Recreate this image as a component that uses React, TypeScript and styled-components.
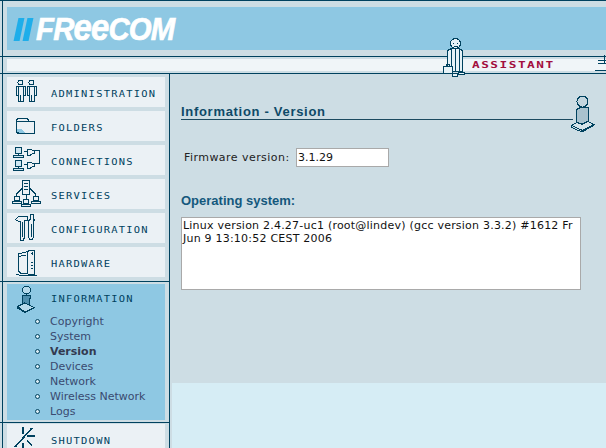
import React from 'react';
import styled, { createGlobalStyle } from 'styled-components';

const DARK = '#00425f';
const PALE = '#cddde4';
const SKY = '#8ec8e3';

const GlobalStyle = createGlobalStyle`
  html, body {
    margin: 0;
    padding: 0;
    background: ${PALE};
  }
`;

const Page = styled.div`
  position: relative;
  width: 606px;
  height: 448px;
  overflow: hidden;
  display: flex;
  flex-direction: column;
  background: linear-gradient(${DARK}, ${DARK}) 2px 0 / 1px 100% no-repeat ${PALE};
  font-family: "DejaVu Sans", Verdana, sans-serif;
`;

const TopBar = styled.header`
  box-sizing: border-box;
  height: 57px;
  padding: 6px 0 0 7px;
  border-top: 1px solid ${DARK};
  border-bottom: 1px solid ${DARK};
`;

const LogoBand = styled.div`
  height: 43px;
  display: flex;
  align-items: center;
  padding-left: 9px;
  gap: 5px;
  background: ${SKY};
`;

const LogoBars = styled.div`
  display: flex;
  gap: 3px;
  margin-top: 1px;
  transform: skewX(-12deg);
`;

const LogoBar = styled.span`
  display: block;
  width: 6px;
  height: 23px;
  background: #1eaeea;
`;

const LogoText = styled.div`
  font-family: "Liberation Sans", Arial, sans-serif;
  font-weight: 700;
  font-style: italic;
  font-size: 32px;
  line-height: 30px;
  letter-spacing: -0.8px;
  color: #fff;
  transform: scaleX(0.915);
  transform-origin: left center;
  -webkit-text-stroke: 0.7px #fff;
`;

const LogoE = styled.span`
  font-size: 36px;
  letter-spacing: -1px;
`;

const AssistantBar = styled.div`
  box-sizing: border-box;
  height: 17px;
  padding: 2px 0 2px 7px;
  border-bottom: 1px solid ${DARK};
`;

const AssistantStrip = styled.div`
  display: flex;
  align-items: center;
  height: 12px;
  padding-left: 465px;
  background: #f0f5f8;
`;

const AssistantLabel = styled.span`
  font-family: "DejaVu Sans Mono", monospace;
  font-weight: 700;
  font-size: 8.5px;
  line-height: 12px;
  letter-spacing: 1px;
  color: #a3103f;
  transform: scaleX(1.5);
  transform-origin: left center;
`;

const Overlay = styled.svg<{ $left: number; $top: number }>`
  position: absolute;
  left: ${p => p.$left}px;
  top: ${p => p.$top}px;
  shape-rendering: crispEdges;
`;

const Main = styled.div`
  flex: 1;
  display: flex;
  min-height: 0;
`;

const Sidebar = styled.nav`
  box-sizing: border-box;
  width: 170px;
  flex: none;
  border-right: 1px solid ${DARK};
`;

const MenuGroup = styled.div`
  display: flex;
  flex-direction: column;
  gap: 4px;
  padding: 3px 4px 4px 7px;
  border-bottom: 1px solid ${DARK};
`;

const ActiveGroup = styled.div`
  padding: 2px 4px 2px 7px;
  border-bottom: 1px solid ${DARK};
`;

const LastGroup = styled.div`
  padding: 1px 4px 0 7px;
`;

const MenuItem = styled.div<{ $active?: boolean }>`
  height: 30px;
  display: flex;
  align-items: center;
  background: ${p => (p.$active ? SKY : '#ebf1f5')};
`;

const ItemIcon = styled.svg`
  width: 44px;
  height: 30px;
  flex: none;
  shape-rendering: crispEdges;
`;

const ItemLabel = styled.span<{ $active?: boolean }>`
  display: inline-block;
  margin-top: ${p => (p.$active ? 2 : 6)}px;
  font-family: "DejaVu Sans Mono", monospace;
  font-size: 8px;
  line-height: 10px;
  letter-spacing: 0.97px;
  color: ${DARK};
  text-transform: uppercase;
  white-space: nowrap;
  transform: scaleX(1.3);
  transform-origin: left center;
`;

const ActivePanel = styled.div`
  height: 136px;
  background: ${SKY};
`;

const SubList = styled.ul`
  list-style: none;
  margin: 0;
  padding: 0 0 0 43px;
`;

const SubItem = styled.li<{ $current?: boolean }>`
  position: relative;
  height: 15px;
  font-size: 11px;
  line-height: 15px;
  font-weight: ${p => (p.$current ? 700 : 400)};
  color: ${p => (p.$current ? '#333a50' : '#3a4a70')};

  &::before {
    content: '';
    position: absolute;
    left: -15px;
    top: 5px;
    width: 3px;
    height: 3px;
    border: 1px solid ${DARK};
    border-radius: 50%;
    background: #d8ecf5;
  }
`;

const Content = styled.main`
  position: relative;
  flex: 1;
  padding: 30px 0 0 9px;
  border-left: 2px solid ${PALE};
  background: linear-gradient(${PALE} 309px, #d6edf5 309px);
`;

const Title = styled.h1`
  box-sizing: border-box;
  width: 392px;
  height: 16px;
  margin: 0;
  border-bottom: 1px solid #1c4a60;
  font-family: "Liberation Sans", Arial, sans-serif;
  font-size: 13px;
  line-height: 15px;
  font-weight: 700;
  letter-spacing: 0.7px;
  color: #0e4a68;
`;

const FirmwareRow = styled.div`
  display: flex;
  align-items: center;
  margin: 28px 0 0 3px;
`;

const FirmwareLabel = styled.label`
  width: 112px;
  font-size: 11px;
  letter-spacing: 0.45px;
  color: #222;
`;

const FirmwareInput = styled.input`
  box-sizing: border-box;
  width: 93px;
  height: 19px;
  padding: 0 1px;
  border: 1px solid #a9a9a9;
  outline: none;
  background: #fff;
  font-family: "DejaVu Sans", Verdana, sans-serif;
  font-size: 11px;
  color: #111;
`;

const SubHeading = styled.h2`
  margin: 26px 0 8px;
  font-family: "Liberation Sans", Arial, sans-serif;
  font-size: 13px;
  line-height: 16px;
  font-weight: 700;
  color: #14587c;
`;

const OsBox = styled.textarea`
  display: block;
  box-sizing: border-box;
  width: 400px;
  height: 73px;
  padding: 1px 1px;
  border: 1px solid #a9a9a9;
  outline: none;
  resize: none;
  overflow: hidden;
  background: #fff;
  font-family: "DejaVu Sans", Verdana, sans-serif;
  font-size: 11px;
  letter-spacing: 0.22px;
  line-height: 13px;
  color: #111;
`;

const Person = ({ x }: { x: number }) => (
  <g fill="#ebf1f5" stroke={DARK}>
    <circle cx={x} cy={5.5} r={2.5} />
    <path d={`M${x - 4.5} 9.5h9v9h-2v6h-5v-6h-2z`} />
    <path d={`M${x - 2.5} 10v8M${x + 2.5} 10v8M${x} 18v6`} />
  </g>
);

const AdminIcon = () => (
  <ItemIcon viewBox="0 0 44 30">
    <Person x={13.5} />
    <Person x={24.5} />
  </ItemIcon>
);

const FolderIcon = () => (
  <ItemIcon viewBox="0 0 44 30">
    <path d="M9 10l2-3h9l2 3h5.5v12.5h-17l-1.5-1.5z" fill="#ebf1f5" stroke={DARK} />
    <path d="M10 18h4l4 4h-8z" fill={SKY} />
    <path d="M9 10.5h13" fill="none" stroke={DARK} />
    <path d="M10 21l2 1.5h15" fill="none" stroke={DARK} />
  </ItemIcon>
);

const Workstation = ({ y }: { y: number }) => (
  <g fill="#cfe6f1" stroke={DARK}>
    <rect x={8.5} y={y} width={6} height={6} />
    <path d={`M11.5 ${y + 6}v2`} />
    <rect x={6.5} y={y + 8} width={10} height={2} />
    <path d={`M20.5 ${y + 1.5}h3l2 1.5h2v3h-2l-2 1.5h-3z`} fill="#ebf1f5" />
    <path d={`M16.5 ${y + 4}h4`} />
  </g>
);

const ConnectionsIcon = () => (
  <ItemIcon viewBox="0 0 44 30">
    <Workstation y={2.5} />
    <Workstation y={15.5} />
    <path d="M27 5.5h5.5v13h-5.5" fill="none" stroke={DARK} />
  </ItemIcon>
);

const Terminal = ({ x, y }: { x: number; y: number }) => (
  <g fill="#ebf1f5" stroke={DARK}>
    <rect x={x} y={y} width={5} height={4} />
    <rect x={x - 2} y={y + 5} width={9} height={2} />
  </g>
);

const ServicesIcon = () => (
  <ItemIcon viewBox="0 0 44 30">
    <rect x={15.5} y={1.5} width={7} height={14} fill="#ebf1f5" stroke={DARK} />
    <path d="M17 4.5h4M17 7.5h4M17 10.5h4" fill="none" stroke={DARK} />
    <path d="M15.5 9l-6 6v2M22.5 9l6 6v2M19 15.5v4" fill="none" stroke={DARK} />
    <Terminal x={7.5} y={17.5} />
    <Terminal x={16.5} y={20.5} />
    <Terminal x={26.5} y={17.5} />
  </ItemIcon>
);

const ConfigIcon = () => (
  <ItemIcon viewBox="0 0 44 30">
    <path d="M8.5 6.500l3-3h8.500v4h-3v18l-1 2h-2l-1-2V8h-2z" fill="#ebf1f5" stroke={DARK} />
    <path d="M15.500 9v15" fill="none" stroke={DARK} />
    <path d="M21.500 9l1-3h1V1.500h3V6h1l-1 3v15l-1 2.500h-3l-1-2.500z" fill="#ebf1f5" stroke={DARK} />
    <path d="M24.500 11v13" fill="none" stroke={DARK} />
  </ItemIcon>
);

const HardwareIcon = () => (
  <ItemIcon viewBox="0 0 44 30">
    <path d="M11.500 7l9-2.500v22l-7-.5-2-2z" fill="#ebf1f5" stroke={DARK} />
    <path d="M20.500 4.500l3-1.500h4v24h-7" fill="#ebf1f5" stroke={DARK} />
    <path d="M11.500 9.500l8-1.500M24 6.500h2M25 5v3M24 18.500h2M24 21.500h2M24 15.500h2" fill="none" stroke={DARK} />
    <path d="M9 27l4 1.500h17" fill="none" stroke={DARK} />
  </ItemIcon>
);

const InfoIcon = () => (
  <ItemIcon viewBox="0 0 44 30">
    <circle cx={19.500} cy={6} r={4} fill="#b5d9ea" stroke={DARK} />
    <path d="M15.500 11.500h8v3h-1.500V23h-6.500z" fill="#4f8fae" stroke={DARK} />
    <path d="M10.500 22.500l7-3.500 9.500 4.500-9 4.500z" fill="#b5d9ea" stroke={DARK} />
    <path d="M10.500 22.500v1.500l7.500 4.500 9-4.500v-1" fill="none" stroke={DARK} />
  </ItemIcon>
);

const ShutdownIcon = () => (
  <ItemIcon viewBox="0 0 44 30">
    <g fill="none" stroke={DARK} strokeWidth={1.6}>
      <path d="M8 23L25 4" />
      <path d="M16 3v7" />
      <path d="M20 12h8" />
      <path d="M20 17l5 4" />
      <path d="M16 19v6" />
    </g>
  </ItemIcon>
);

const menuItems = [
  { label: 'Administration', icon: <AdminIcon /> },
  { label: 'Folders', icon: <FolderIcon /> },
  { label: 'Connections', icon: <ConnectionsIcon /> },
  { label: 'Services', icon: <ServicesIcon /> },
  { label: 'Configuration', icon: <ConfigIcon /> },
  { label: 'Hardware', icon: <HardwareIcon /> },
];

const subItems = ['Copyright', 'System', 'Version', 'Devices', 'Network', 'Wireless Network', 'Logs'];

const App: React.FC = () => (
  <>
    <GlobalStyle />
    <Page>
      <TopBar>
        <LogoBand>
          <LogoBars>
            <LogoBar />
            <LogoBar />
          </LogoBars>
          <LogoText>
            FR<LogoE>ee</LogoE>COM
          </LogoText>
        </LogoBand>
      </TopBar>
      <AssistantBar>
        <AssistantStrip>
          <AssistantLabel>ASSISTANT</AssistantLabel>
        </AssistantStrip>
      </AssistantBar>
      <Main>
        <Sidebar>
          <MenuGroup>
            {menuItems.map(item => (
              <MenuItem key={item.label}>
                {item.icon}
                <ItemLabel>{item.label}</ItemLabel>
              </MenuItem>
            ))}
          </MenuGroup>
          <ActiveGroup>
            <ActivePanel>
              <MenuItem $active>
                <InfoIcon />
                <ItemLabel $active>Information</ItemLabel>
              </MenuItem>
              <SubList>
                {subItems.map(name => (
                  <SubItem key={name} $current={name === 'Version'}>
                    {name}
                  </SubItem>
                ))}
              </SubList>
            </ActivePanel>
          </ActiveGroup>
          <LastGroup>
            <MenuItem>
              <ShutdownIcon />
              <ItemLabel>Shutdown</ItemLabel>
            </MenuItem>
          </LastGroup>
        </Sidebar>
        <Content>
          <Title>Information - Version</Title>
          <Overlay $left={398} $top={20} width={26} height={40} viewBox="0 0 26 40">
            <circle cx={12.500} cy={7.500} r={5.500} fill="#c3d6df" stroke={DARK} />
            <path d="M6.500 15.500l5-2.500h6.500v14l-6 3-5.500-2z" fill="#a9c2ce" stroke={DARK} />
            <path d="M1.500 31.500l5-3 5.500 2 6-3 5.500 3-11 6z" fill="#d5e4ea" stroke={DARK} />
            <path d="M1.500 31.500v2l10.500 4.500 11.500-6.500v-1.500" fill="none" stroke={DARK} />
          </Overlay>
          <FirmwareRow>
            <FirmwareLabel>Firmware version:</FirmwareLabel>
            <FirmwareInput readOnly value="3.1.29" />
          </FirmwareRow>
          <SubHeading>Operating system:</SubHeading>
          <OsBox
            readOnly
            value="Linux version 2.4.27-uc1 (root@lindev) (gcc version 3.3.2) #1612 Fr Jun 9 13:10:52 CEST 2006"
          />
        </Content>
      </Main>
      <Overlay $left={441} $top={35} width={26} height={44} viewBox="0 0 26 44">
        <circle cx={14.500} cy={8.500} r={5} fill="#e6f2f7" stroke={DARK} />
        <path d="M12 8.500h1M16 8.500h1M12.500 11.500h4" stroke={DARK} fill="none" />
        <path d="M6.500 15.500l4-2h7l4 2v21h-15z" fill="#e6f2f7" stroke={DARK} />
        <path d="M10.500 14v22M14.500 13.500v23M18.500 14v22" stroke={DARK} fill="none" />
        <rect x={2.500} y={31.500} width={9} height={7} fill="#e6f2f7" stroke={DARK} />
        <path d="M5 31.500l1-2h2l1 2" fill="none" stroke={DARK} />
        <path d="M11.500 38.500h5v3h-5zM17.500 37.500h6v2h-6z" fill="#e6f2f7" stroke={DARK} />
      </Overlay>
      <Overlay $left={594} $top={54} width={12} height={18} viewBox="0 0 12 18">
        <path d="M4 6.500h8M3.500 9.500h8M10.500 1v8M1 16.500h11" fill="none" stroke={DARK} />
      </Overlay>
    </Page>
  </>
);

export default App;
